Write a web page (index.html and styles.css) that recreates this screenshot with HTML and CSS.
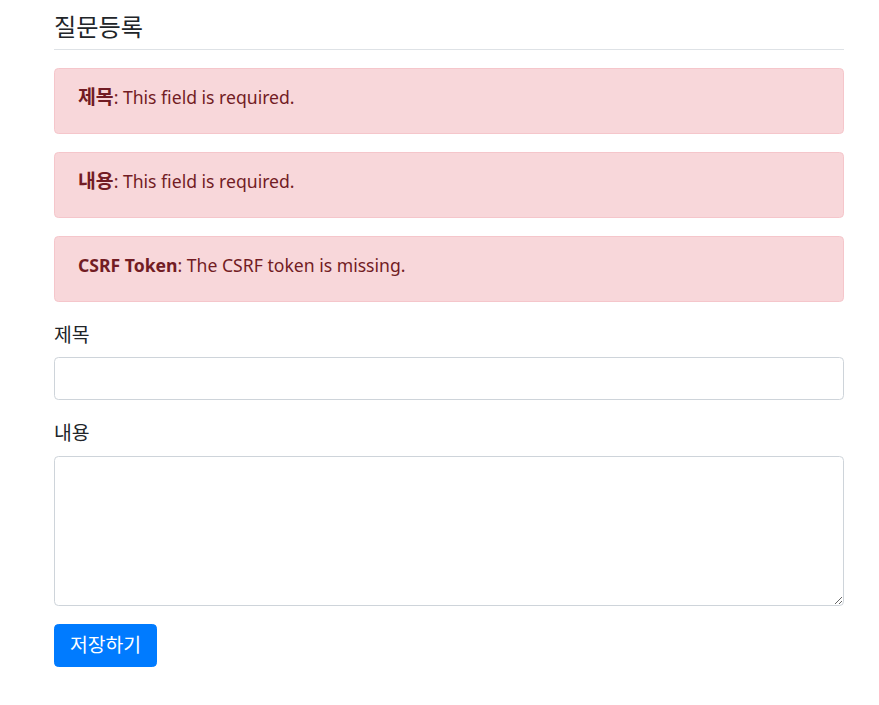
FILE: index.html
```html
<!DOCTYPE html>
<html lang="ko">
<head>
<meta charset="utf-8">
<title>질문등록</title>
<link rel="stylesheet" href="styles.css">
</head>
<body>
<div class="container">
  <h5 class="title"><span class="ko">질문등록</span></h5>
  <form class="form" method="post">
    <div class="alert"><strong class="ko">제목</strong>: This field is required.</div>
    <div class="alert"><strong class="ko">내용</strong>: This field is required.</div>
    <div class="alert"><strong>CSRF Token</strong>: The CSRF token is missing.</div>
    <div class="group">
      <label class="label" for="subject"><span class="ko">제목</span></label>
      <input class="control" type="text" id="subject" name="subject">
    </div>
    <div class="group">
      <label class="label" for="content"><span class="ko">내용</span></label>
      <textarea class="control area" id="content" name="content"></textarea>
    </div>
    <button class="btn" type="submit"><span class="ko">저장하기</span></button>
  </form>
</div>
</body>
</html>
```
FILE: styles.css
```css
html, body {
  margin: 0;
  padding: 0;
  background: #fff;
}
body {
  font-family: "Noto Sans", "Noto Sans CJK KR", sans-serif;
  font-size: 17.6px;
  line-height: 26.4px;
  color: #212529;
}
.ko {
  font-size: 1.1em;
}
.container {
  width: 790px;
  margin-left: 54px;
  padding-top: 5px;
}
.title {
  margin: 0;
  padding: 9px 0;
  font-size: 22px;
  line-height: 26px;
  font-weight: 400;
  border-bottom: 1px solid #dee2e6;
}
.form {
  display: flex;
  flex-direction: column;
  align-items: flex-start;
  padding-top: 18px;
}
.alert {
  box-sizing: border-box;
  width: 100%;
  height: 66px;
  margin-bottom: 18px;
  padding: 15px 23px 0;
  background: #f8d7da;
  border: 1px solid #f5c6cb;
  border-radius: 4.4px;
  color: #721c24;
}
.alert strong {
  font-weight: 700;
}
.group {
  width: 100%;
  display: flex;
  flex-direction: column;
  margin-bottom: 18px;
}
.label {
  padding-top: 2px;
  margin-bottom: 9px;
}
.control {
  box-sizing: border-box;
  display: block;
  width: 100%;
  height: 43px;
  margin: 0;
  padding: 6.6px 13.2px;
  font: inherit;
  color: #495057;
  background: #fff;
  border: 1px solid #ced4da;
  border-radius: 4.4px;
  outline: none;
}
.area {
  height: 150px;
  resize: vertical;
}
.btn {
  box-sizing: border-box;
  height: 43px;
  width: 103px;
  padding: 0;
  font: inherit;
  color: #fff;
  background: #007bff;
  border: 1px solid #007bff;
  border-radius: 4.4px;
  cursor: pointer;
}
```
